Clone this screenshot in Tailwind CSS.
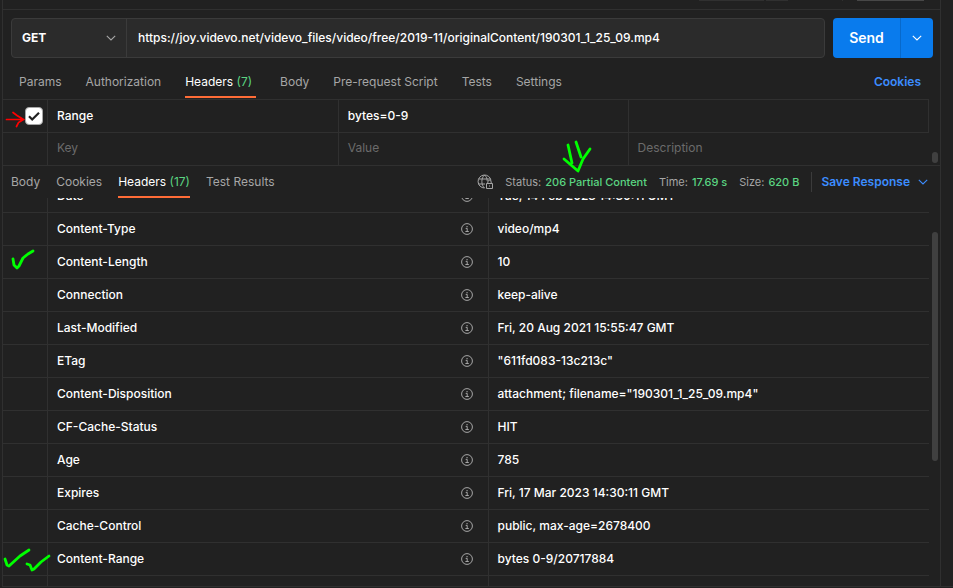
<!DOCTYPE html>
<html lang="en">
<head>
    <meta charset="UTF-8">
    <meta name="viewport" content="width=device-width, initial-scale=1.0">
    <title>Request</title>
    <script src="https://cdn.jsdelivr.net/npm/@tailwindcss/browser@4"></script>
</head>
<body class="h-screen overflow-hidden bg-[#212121] font-['Inter',sans-serif] text-[12px] leading-4 text-white flex pl-[2px] pb-px">

    <!-- shared icons -->
    <svg class="hidden">
        <symbol id="info" viewBox="0 0 12 12">
            <circle cx="6" cy="6" r="5.4" fill="none" stroke="currentColor" />
            <path d="M4.7 5.4h1.5v3M4.4 8.5h3.4" fill="none" stroke="currentColor" />
            <path d="M5.5 3h1.1v1.2H5.5z" fill="currentColor" />
        </symbol>
        <symbol id="chevron" viewBox="0 0 10 6">
            <path d="M.8.8 5 5 9.2.8" fill="none" stroke="currentColor" stroke-width="1.1" />
        </symbol>
    </svg>

    <main class="flex-1 min-w-0 flex flex-col border-x border-b border-[#303030]">

        <!-- bottom edge of the toolbar -->
        <div class="h-[9px] shrink-0 flex items-start justify-end gap-[2px] pr-4">
            <span class="w-[65px] h-px bg-[#303030]"></span>
            <span class="w-[22px] h-px bg-[#303030]"></span>
            <span class="w-px h-px ml-[52px] bg-[#303030]"></span>
            <span class="w-[67px] h-px ml-3 bg-[#474747]"></span>
        </div>

        <!-- url bar -->
        <form class="shrink-0 border-t border-[#303030] flex gap-2 pl-2 pr-[7px] pt-2">
            <div class="flex-1 h-10 flex rounded border border-[#3b3b3b] bg-[#2b2b2b]">
                <div class="relative w-[115px] border-r border-[#3b3b3b]">
                    <select aria-label="Method" class="appearance-none w-full h-full pl-[10px] bg-transparent text-[12px] font-bold">
                        <option>GET</option>
                        <option>POST</option>
                        <option>PUT</option>
                        <option>DELETE</option>
                    </select>
                    <svg class="absolute right-[10px] top-4 w-[10px] h-[6px] text-[#a6a6a6] pointer-events-none"><use href="#chevron" /></svg>
                </div>
                <input type="text" aria-label="Request URL" class="flex-1 min-w-0 px-[11px] bg-transparent text-[12px] font-medium outline-none" value="https://joy.videvo.net/videvo_files/video/free/2019-11/originalContent/190301_1_25_09.mp4">
            </div>
            <div class="flex h-10 rounded overflow-hidden bg-[#097bed]">
                <button type="submit" class="w-[67px] text-sm font-semibold">Send</button>
                <button type="button" aria-label="Send options" class="w-[33px] border-l border-[#0769cb] flex items-center justify-center">
                    <svg class="w-[10px] h-[6px]"><use href="#chevron" /></svg>
                </button>
            </div>
        </form>

        <!-- request tabs -->
        <nav class="shrink-0 h-10 flex items-stretch gap-6 pl-4 pr-[19px] text-[#a6a6a6]">
            <a href="#" class="pt-4">Params</a>
            <a href="#" class="pt-4">Authorization</a>
            <a href="#" class="pt-4 pr-1 border-b-2 border-[#ff6c37] text-white">Headers <span class="text-[#5bd582]">(7)</span></a>
            <a href="#" class="pt-4">Body</a>
            <a href="#" class="pt-4">Pre-request Script</a>
            <a href="#" class="pt-4">Tests</a>
            <a href="#" class="pt-4">Settings</a>
            <a href="#" class="pt-4 ml-auto font-semibold text-[#3c8dff]">Cookies</a>
        </nav>

        <!-- request headers -->
        <section class="shrink-0 relative pt-px pr-[11px] border-b border-[#303030]">
            <table class="w-full table-fixed border-separate border-spacing-0">
                <tbody>
                    <tr class="h-[34px] font-medium">
                        <td class="relative w-[45px] border-y border-r border-[#303030]">
                            <label class="absolute left-[22px] top-[7px] w-[18px] h-[18px]">
                                <input type="checkbox" checked aria-label="Use Range header" class="appearance-none block w-[18px] h-[18px] rounded-[4px] border border-[#a6a6a6] bg-white">
                                <svg class="absolute inset-px w-4 h-4 pointer-events-none" viewBox="0 0 16 16" fill="none" stroke="#212121" stroke-width="2.2"><path d="m3 8.2 3.2 3.3L13 4.7" /></svg>
                            </label>
                            <svg class="absolute left-[2px] top-3 w-5 h-4 overflow-visible" viewBox="0 0 20 16" fill="none" stroke="#f00" stroke-width="1.7" stroke-linecap="round"><path d="M1.500 7.500H18M8 .5l4 3 6.500 4-5 3-2 4" /></svg>
                        </td>
                        <td class="w-[31.4%] border-y border-r border-[#303030] px-[9px]">Range</td>
                        <td class="w-[31.3%] border-y border-r border-[#303030] px-[9px]">bytes=0-9</td>
                        <td class="border-y border-r border-[#303030] px-[9px]"></td>
                    </tr>
                    <tr class="h-8 text-[#6b6b6b] [&_td]:pb-[2px]">
                        <td class="border-r border-[#303030]"></td>
                        <td class="border-r border-[#303030] px-[9px]">Key</td>
                        <td class="border-r border-[#303030] px-[9px]">Value</td>
                        <td class="px-[9px]">Description</td>
                    </tr>
                </tbody>
            </table>
            <span class="absolute right-[2px] bottom-[2px] w-[6px] h-[11px] rounded-full bg-[#404040]"></span>
        </section>

        <!-- response tabs and status -->
        <div class="relative z-10 shrink-0 h-8 flex items-stretch pl-2 pr-3 bg-[#212121] text-[#a6a6a6]">
            <nav class="flex items-stretch gap-4">
                <a href="#" class="pt-2">Body</a>
                <a href="#" class="pt-2">Cookies</a>
                <a href="#" class="pt-2 border-b-2 border-[#ff6c37] text-white">Headers <span class="text-[#5bd582]">(17)</span></a>
                <a href="#" class="pt-2">Test Results</a>
            </nav>
            <div class="ml-auto flex items-center gap-3 text-[11px]">
                <svg class="w-4 h-4" viewBox="0 0 16 16" fill="none" stroke="currentColor">
                    <path d="M7.5 14A6.5 6.5 0 1 1 14 6.5M7.5 1C4 4 4 11 7.5 14M7.5 1c2 1.8 2.7 3.6 2.7 6M1.5 5h12M1.5 10H8" />
                    <path d="M9.5 9.5h6v5h-6zM10.8 9.5V8a1.7 1.7 0 0 1 3.4 0v1.5M12.5 11.5v1" />
                </svg>
                <span class="relative flex gap-1">Status: <span class="font-medium text-[#5bd582]">206 Partial Content</span>
                    <svg class="absolute left-[57px] -top-[34px] w-[30px] h-8 overflow-visible" viewBox="0 0 30 32" fill="none" stroke="#0f0" stroke-width="2.8" stroke-linecap="round" stroke-linejoin="round"><path d="M6 5l4 18M14 2l5 15M2 19l14 12M28 9l-7 10-5 12" /></svg>
                </span>
                <span class="flex gap-1">Time: <span class="font-medium text-[#5bd582]">17.69 s</span></span>
                <span class="flex gap-1">Size: <span class="font-medium text-[#5bd582]">620 B</span></span>
                <button type="button" class="h-5 flex items-center gap-2 border-l border-[#3b3b3b] pl-[9px] text-[12px] font-semibold text-[#3c8dff]">Save Response
                    <svg class="w-[10px] h-[6px]"><use href="#chevron" /></svg>
                </button>
            </div>
        </div>

        <!-- response headers, scrolled a little -->
        <section class="flex-1 min-h-0 overflow-hidden relative pr-[11px]">
            <table class="w-full table-fixed border-separate border-spacing-0 -mt-[18px] font-medium [&_td]:border-b [&_td]:border-[#303030] [&_td:not(:last-child)]:border-r [&_td]:px-[9px] [&_tr]:h-[33px]">
                <colgroup>
                    <col class="w-[45px]">
                    <col>
                    <col>
                </colgroup>
                <tbody id="rows"></tbody>
            </table>
            <span class="absolute right-[2px] top-[34px] w-[6px] h-[229px] rounded-full bg-[#404040]"></span>
        </section>
    </main>

    <aside class="w-3 shrink-0 border-b border-[#303030]"></aside>

    <script>
        const headers = [
            ["Date", "Tue, 14 Feb 2023 14:30:11 GMT"],
            ["Content-Type", "video/mp4"],
            ["Content-Length", "10", "one"],
            ["Connection", "keep-alive"],
            ["Last-Modified", "Fri, 20 Aug 2021 15:55:47 GMT"],
            ["ETag", '"611fd083-13c213c"'],
            ["Content-Disposition", 'attachment; filename="190301_1_25_09.mp4"'],
            ["CF-Cache-Status", "HIT"],
            ["Age", "785"],
            ["Expires", "Fri, 17 Mar 2023 14:30:11 GMT"],
            ["Cache-Control", "public, max-age=2678400"],
            ["Content-Range", "bytes 0-9/20717884", "two"],
            ["", ""]
        ];
        // green ticks drawn over the first column
        const ticks = {
            one: '<path d="M10 13l1 6 3 3 2-2 4-8 5-4 5-3" />',
            two: '<path d="M2 16l2 6 2 1 11-10 9-6M24 21l3 1 2 5 2-1 7-7 8-6" />'
        };
        const info = '<svg class="w-3 h-3 shrink-0 mr-[6px] text-[#a6a6a6]"><use href="#info" /></svg>';

        headers.forEach(([name, value, tick]) => {
            const row = document.createElement("tr");
            const mark = tick ? '<svg class="absolute left-0 top-0 w-12 h-8 z-10" viewBox="0 0 48 32" fill="none" stroke="#0f0" stroke-width="2.8" stroke-linecap="round" stroke-linejoin="round">' + ticks[tick] + '</svg>' : "";
            row.innerHTML = '<td class="relative">' + mark + '</td>'
                + '<td><div class="flex items-center justify-between"><span>' + name + '</span>' + (name ? info : "") + '</div></td>'
                + '<td>' + value + '</td>';
            document.getElementById("rows").appendChild(row);
        });
    </script>

</body>
</html>
